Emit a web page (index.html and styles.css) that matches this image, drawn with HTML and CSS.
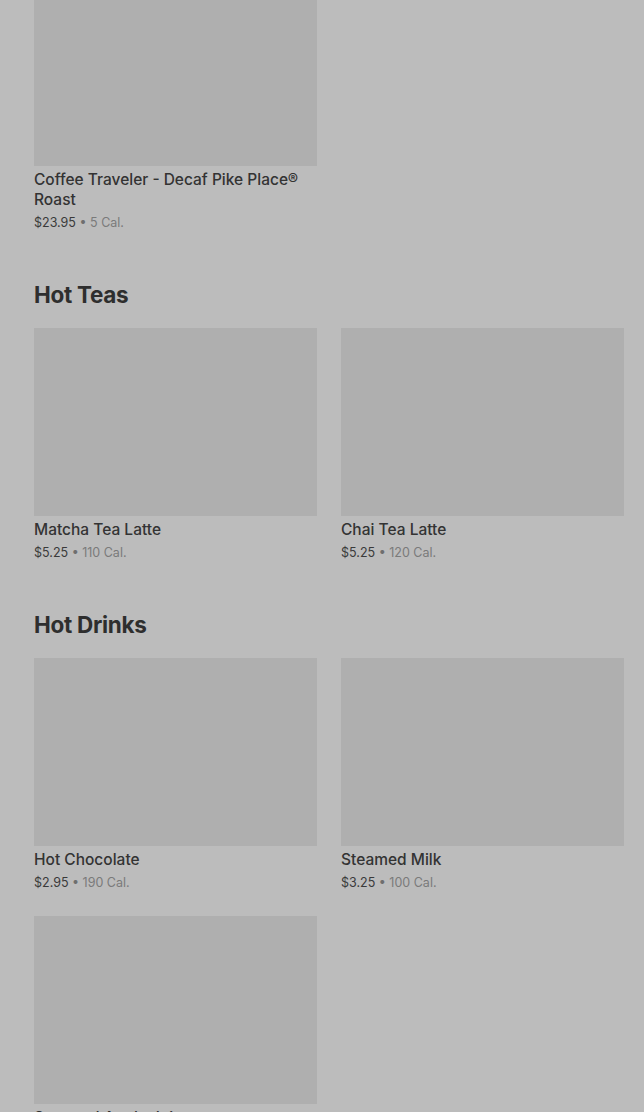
FILE: index.html
```html
<!DOCTYPE html>
<html lang="en">
<head>
    <meta charset="UTF-8">
    <meta name="viewport" content="width=device-width, initial-scale=1.0">
    <title>Menu</title>
    <link rel="stylesheet" href="styles.css">
</head>
<body>
    <div class="menu">
        <section class="menu-section first">
            <div class="product-grid">
                <div class="product">
                    <div class="product-image"></div>
                    <div class="product-name">Coffee Traveler - Decaf Pike Place® Roast</div>
                    <div class="product-meta"><span class="price">$23.95</span> • <span class="cal">5 Cal.</span></div>
                </div>
            </div>
        </section>

        <section class="menu-section">
            <h2>Hot Teas</h2>
            <div class="product-grid">
                <div class="product">
                    <div class="product-image"></div>
                    <div class="product-name">Matcha Tea Latte</div>
                    <div class="product-meta"><span class="price">$5.25</span> • <span class="cal">110 Cal.</span></div>
                </div>
                <div class="product">
                    <div class="product-image"></div>
                    <div class="product-name">Chai Tea Latte</div>
                    <div class="product-meta"><span class="price">$5.25</span> • <span class="cal">120 Cal.</span></div>
                </div>
            </div>
        </section>

        <section class="menu-section">
            <h2>Hot Drinks</h2>
            <div class="product-grid">
                <div class="product">
                    <div class="product-image"></div>
                    <div class="product-name">Hot Chocolate</div>
                    <div class="product-meta"><span class="price">$2.95</span> • <span class="cal">190 Cal.</span></div>
                </div>
                <div class="product">
                    <div class="product-image"></div>
                    <div class="product-name">Steamed Milk</div>
                    <div class="product-meta"><span class="price">$3.25</span> • <span class="cal">100 Cal.</span></div>
                </div>
                <div class="product">
                    <div class="product-image"></div>
                    <div class="product-name">Steamed Apple Juice</div>
                    <div class="product-meta"><span class="price">$3.25</span> • <span class="cal">170 Cal.</span></div>
                </div>
            </div>
        </section>
    </div>
</body>
</html>
```

FILE: styles.css
```css
/* General Styles */
html, body {
    height: 100%;
    overflow: hidden;
}

body {
    font-family: Inter, "Noto Sans", sans-serif;
    background-color: #bcbcbc;
    margin: 0;
    color: #333;
}

/* Menu */
.menu {
    padding: 0 20px 0 34px;
    margin-top: -22px;
}

.menu-section {
    padding-bottom: 47px;
}

.menu-section h2 {
    margin: 0 0 17px;
    font-size: 22.5px;
    line-height: 32px;
    font-weight: 700;
    letter-spacing: -0.3px;
    color: #2e2e2e;
}

.product-grid {
    display: grid;
    grid-template-columns: 283px 283px;
    column-gap: 24px;
    row-gap: 24px;
}

/* Product Card */
.product-image {
    height: 188px;
    background: #afafaf;
    margin-bottom: 4px;
}

.product-name {
    font-size: 15.5px;
    line-height: 20px;
    font-weight: 500;
    color: #333;
}

.product-meta {
    margin-top: 4px;
    font-size: 12.5px;
    line-height: 18px;
    color: #6e6e6e;
}

.product-meta .price {
    color: #3a3a3a;
}

.product-meta .cal {
    color: #7a7a7a;
}
```
